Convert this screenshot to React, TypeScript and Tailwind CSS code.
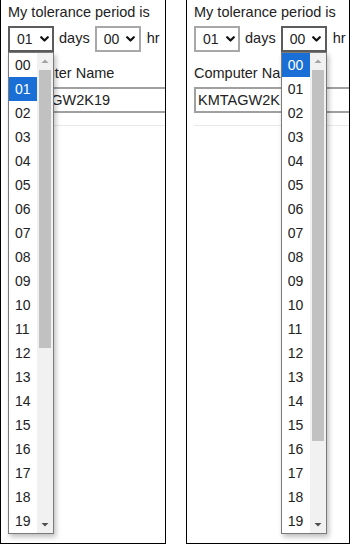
import React from "react";

const pad = (n: number) => (n < 10 ? `0${n}` : `${n}`);

const Chevron = () => (
  <svg width="9" height="6" viewBox="0 0 9 6" className="shrink-0">
    <path d="M1.2 1.2 L4.5 4.5 L7.8 1.2" fill="none" stroke="#111" strokeWidth="2.2" strokeLinecap="round" strokeLinejoin="round" />
  </svg>
);

interface ListProps {
  selected: number;
  thumbEnd: number;
}

const ListBox = ({ selected, thumbEnd }: ListProps) => {
  const items = Array.from({ length: 20 }, (_, i) => i);
  return (
    <div className="absolute left-0 top-full z-10 flex w-[46px] h-[482px] border border-[#7a7a7a] bg-white shadow-[2px_3px_5px_rgba(0,0,0,0.25)]">
      <div className="flex flex-col w-[28px] overflow-hidden">
        {items.map((i) => (
          <div
            key={i}
            className={`h-[24px] shrink-0 pl-[6px] text-[14px] leading-[24px] ${
              i === selected ? "bg-[#1a6fd6] text-white" : "text-[#222]"
            }`}
          >
            {pad(i)}
          </div>
        ))}
      </div>
      <div className="relative w-[16px] bg-[#f1f1f1]">
        <svg width="16" height="16" viewBox="0 0 16 16" className="absolute top-0 left-0">
          <path d="M4.5 10 L8 6.5 L11.5 10 Z" fill="#a3a3a3" />
        </svg>
        <div
          className="absolute left-[2px] right-[2px] top-[17px] bg-[#c1c1c1]"
          style={{ height: thumbEnd - 70 }}
        />
        <svg width="16" height="16" viewBox="0 0 16 16" className="absolute bottom-0 left-0">
          <path d="M4.5 6 L8 9.5 L11.5 6 Z" fill="#505050" />
        </svg>
      </div>
    </div>
  );
};

interface SelectProps {
  value: string;
  open?: boolean;
  selected?: number;
  thumbEnd?: number;
}

const FakeSelect = ({ value, open, selected = 0, thumbEnd = 348 }: SelectProps) => (
  <div className="relative shrink-0">
    <div
      className={`flex items-center w-[46px] h-[26px] pl-[7px] gap-[7px] border-2 bg-white text-[14px] text-[#222] ${
        open ? "border-[#5c5c5c]" : "border-[#a8a8a8]"
      }`}
    >
      <span>{value}</span>
      <Chevron />
    </div>
    {open && <ListBox selected={selected} thumbEnd={thumbEnd} />}
  </div>
);

interface PanelProps {
  openDays: boolean;
}

const Panel = ({ openDays }: PanelProps) => (
  <div className="relative h-[544px] border-x border-b border-black pl-[7px] pt-[4px] font-['Liberation_Sans',Arial,sans-serif] text-[14.5px] text-[#222]">
    <p className="leading-[16px] whitespace-nowrap">My tolerance period is</p>
    <div className="mt-[6px] flex items-center gap-[5px]">
      <FakeSelect value="01" open={openDays} selected={1} thumbEnd={348} />
      <span>days</span>
      <FakeSelect value="00" open={!openDays} selected={0} thumbEnd={441} />
      <span className="ml-[1px]">hr</span>
    </div>
    <div className="overflow-hidden">
      <p className="mt-[13px] leading-[16px] whitespace-nowrap">Computer Name</p>
      <div className="mt-[6px] w-[230px] h-[26px] border-2 border-[#a0a0a0] pl-[2px] leading-[22px] whitespace-nowrap">
        KMTAGW2K19
      </div>
      <div className="mt-[12px] border-t border-[#e8e8e8]" />
    </div>
  </div>
);

export default function App() {
  return (
    <div className="flex bg-white w-[350px] h-[545px]">
      <div className="w-[166px] overflow-hidden">
        <Panel openDays={true} />
      </div>
      <div className="ml-[20px] w-[164px] overflow-hidden">
        <Panel openDays={false} />
      </div>
    </div>
  );
}
